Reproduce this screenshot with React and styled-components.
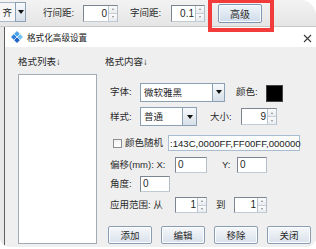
import React from "react";
import styled, { createGlobalStyle } from "styled-components";

const GlobalStyle = createGlobalStyle`
  html, body {
    margin: 0;
    padding: 0;
    background: #fff;
  }
  body {
    font-family: "Liberation Sans", "Noto Sans CJK SC", sans-serif;
  }
`;

const Frame = styled.div`
  position: relative;
  width: 316px;
  height: 247px;
  display: flex;
  flex-direction: column;
  overflow: hidden;
  border-radius: 2px 16px 10px 10px;
  background: #e9e9e9;
  font-size: 9.5px;
  color: #2b2b2b;
`;

const TopBar = styled.div`
  height: 27px;
  flex-shrink: 0;
  display: flex;
  align-items: center;
  box-sizing: border-box;
  background: linear-gradient(#f3f3f3, #e5e5e5);
  border-bottom: 1px solid #c9c9c9;
`;

const ComboStub = styled.div`
  display: flex;
  height: 20px;
  margin-top: -2px;
`;

const StubField = styled.div`
  width: 15px;
  display: flex;
  justify-content: flex-end;
  align-items: center;
  white-space: nowrap;
  padding-right: 3px;
  box-sizing: border-box;
  background: #f6f6f6;
  border-top: 1px solid #a8b6c5;
  border-bottom: 1px solid #a8b6c5;
`;

const ArrowButton = styled.div`
  width: ${(p) => p.$w}px;
  flex-shrink: 0;
  display: flex;
  align-items: center;
  justify-content: center;
  box-sizing: border-box;
  border: 1px solid #8ca0b5;
  background: linear-gradient(#f8fafc, #d7dfe8);
`;

const Triangle = styled.span`
  width: 0;
  height: 0;
  border-left: 3.5px solid transparent;
  border-right: 3.5px solid transparent;
  border-top: 4px solid #111;
`;

const Label = styled.span`
  width: ${(p) => p.$w}px;
  margin-left: ${(p) => p.$ml || 0}px;
  flex-shrink: 0;
  white-space: nowrap;
  line-height: 12px;
`;

const SpinBox = styled.div`
  width: ${(p) => p.$w}px;
  height: ${(p) => p.$h || 17}px;
  flex-shrink: 0;
  display: flex;
  box-sizing: border-box;
  border: 1px solid #7c8590;
  border-right-color: #b4bec9;
  border-bottom-color: #c2cad3;
  background: #fff;
`;

const SpinValue = styled.div`
  flex: 1;
  text-align: right;
  padding-right: 1px;
  line-height: ${(p) => p.$lh || 15}px;
  font-size: 10px;
  color: #1f1f1f;
`;

const SpinArrows = styled.div`
  width: 8px;
  display: flex;
  flex-direction: column;
  border-left: 1px solid #b9c4cf;
`;

const SpinHalf = styled.div`
  flex: 1;
  display: flex;
  align-items: center;
  justify-content: center;
  background: linear-gradient(#fbfbfb, #e8ecf0);
  & + & {
    border-top: 1px solid #c6cfd8;
  }
`;

const Tiny = styled.span`
  width: 0;
  height: 0;
  border-left: 1.5px solid transparent;
  border-right: 1.5px solid transparent;
  ${(p) =>
    p.$up ? "border-bottom: 2px solid #8a8a8a;" : "border-top: 2px solid #8a8a8a;"}
`;

const ToolButton = styled.button`
  width: 44px;
  height: 19px;
  margin-left: 13px;
  padding: 0;
  font-family: inherit;
  font-size: 10px;
  color: #2a2a2a;
  border: 1px solid #7f97b2;
  border-radius: 2px;
  background: linear-gradient(#eef4fa, #d0dcea);
  box-shadow: inset 0 0 0 1px #f7fbff;
`;

const Highlight = styled.div`
  position: absolute;
  left: 208px;
  top: -1px;
  width: 66px;
  height: 33px;
  box-sizing: border-box;
  border: 4px solid #f23b3b;
  pointer-events: none;
`;

const Lower = styled.div`
  flex: 1;
  display: flex;
  min-height: 0;
`;

const Strip = styled.div`
  width: 4px;
  flex-shrink: 0;
  background: #e8e8e8;
`;

const Dialog = styled.div`
  flex: 1;
  display: flex;
  flex-direction: column;
  border-left: 1px solid #5f5f5f;
  background: #efefef;
`;

const TitleBar = styled.div`
  height: 20px;
  flex-shrink: 0;
  display: flex;
  align-items: center;
  padding-left: 6px;
  background: #fff;
`;

const Title = styled.span`
  margin-left: 4px;
  font-size: 8.6px;
  color: #1a1a1a;
`;

const Close = styled.svg`
  margin-left: auto;
  margin-right: 4px;
  margin-top: 2px;
`;

const Body = styled.div`
  flex: 1;
  display: flex;
  padding: 9px 0 3px 13px;
  min-height: 0;
`;

const ListColumn = styled.div`
  width: 79px;
  flex-shrink: 0;
  display: flex;
  flex-direction: column;
`;

const Heading = styled.div`
  height: 12px;
  line-height: 12px;
  white-space: nowrap;
`;

const ListBox = styled.div`
  flex: 1;
  margin-top: 6px;
  background: #fff;
  border: 1px solid #a3abb4;
`;

const ContentColumn = styled.div`
  flex: 1;
  margin-left: 8px;
  display: flex;
  flex-direction: column;
`;

const Row = styled.div`
  display: flex;
  align-items: center;
  margin-top: ${(p) => p.$mt}px;
  padding-left: ${(p) => (p.$pl === undefined ? 5 : p.$pl)}px;
`;

const Combo = styled.div`
  width: ${(p) => p.$w}px;
  height: 19px;
  flex-shrink: 0;
  display: flex;
  box-sizing: border-box;
  border: 1px solid #8ca0b5;
  background: #fff;
`;

const ComboText = styled.div`
  flex: 1;
  padding-left: 3px;
  line-height: 17px;
  white-space: nowrap;
  overflow: hidden;
`;

const ComboArrow = styled(ArrowButton)`
  border: none;
  border-left: 1px solid #8ca0b5;
`;

const Swatch = styled.div`
  width: 17px;
  height: 17px;
  margin-top: 3px;
  box-sizing: border-box;
  background: #000;
  border: 1px solid #444;
`;

const CheckBox = styled.span`
  width: 9px;
  height: 9px;
  flex-shrink: 0;
  box-sizing: border-box;
  border: 1px solid #8d8d8d;
  background: linear-gradient(#f3f3f3, #fff);
`;

const ColorField = styled.div`
  width: 132px;
  height: 16px;
  margin-left: 2px;
  flex-shrink: 0;
  display: flex;
  align-items: center;
  white-space: nowrap;
  box-sizing: border-box;
  padding-left: 1px;
  border: 1px solid #a9bdd2;
  background: #fbfdff;
  font-size: 9.6px;
  color: #222;
`;

const TextBox = styled.div`
  width: ${(p) => p.$w}px;
  height: 16px;
  flex-shrink: 0;
  box-sizing: border-box;
  padding-left: 2px;
  line-height: 14px;
  font-size: 10px;
  border: 1px solid #7c8590;
  border-right-color: #b4bec9;
  border-bottom-color: #c2cad3;
  background: #fff;
`;

const ButtonRow = styled.div`
  display: flex;
  gap: 9px;
  margin-top: 13px;
  padding-left: 3px;
`;

const ActionButton = styled.button`
  width: 44px;
  height: 18px;
  padding: 0;
  font-family: inherit;
  font-size: 9.5px;
  color: #2a2a2a;
  border: 1px solid #8b9db2;
  border-radius: 2px;
  background: linear-gradient(#f5f8fb, #d9e1ea);
  box-shadow: inset 0 0 0 1px #fbfdff;
`;

const Spinner = ({ w, h, value }) => (
  <SpinBox $w={w} $h={h}>
    <SpinValue $lh={(h || 17) - 2}>{value}</SpinValue>
    <SpinArrows>
      <SpinHalf>
        <Tiny $up />
      </SpinHalf>
      <SpinHalf>
        <Tiny />
      </SpinHalf>
    </SpinArrows>
  </SpinBox>
);

const DialogIcon = () => (
  <svg width="12" height="12" viewBox="0 0 12 12">
    <polygon points="6,0 9,3 6,6 3,3" fill="#4ba4ea" />
    <polygon points="3,3 6,6 3,9 0,6" fill="#2f80da" />
    <polygon points="9,3 12,6 9,9 6,6" fill="#70c3f3" />
    <polygon points="6,6 9,9 6,12 3,9" fill="#1f63c6" />
    <path d="M3 3 L9 9 M9 3 L3 9" stroke="#fff" strokeWidth="0.7" />
  </svg>
);

const buttons = ["添加", "编辑", "移除", "关闭"];

export default function App() {
  return (
    <>
      <GlobalStyle />
      <Frame>
        <TopBar>
          <ComboStub>
            <StubField>齐</StubField>
            <ArrowButton $w={11}>
              <Triangle />
            </ArrowButton>
          </ComboStub>
          <Label $w={40} $ml={17}>行间距:</Label>
          <Spinner w={35} value="0" />
          <Label $w={41} $ml={12}>字间距:</Label>
          <Spinner w={34} value="0.1" />
          <ToolButton>高级</ToolButton>
        </TopBar>

        <Lower>
          <Strip />
          <Dialog>
            <TitleBar>
              <DialogIcon />
              <Title>格式化高级设置</Title>
              <Close width="9" height="9" viewBox="0 0 9 9">
                <path d="M1 1 L8 8 M8 1 L1 8" stroke="#3a3a3a" strokeWidth="1.1" />
              </Close>
            </TitleBar>

            <Body>
              <ListColumn>
                <Heading>格式列表↓</Heading>
                <ListBox />
              </ListColumn>

              <ContentColumn>
                <Heading>格式内容↓</Heading>

                <Row $mt={14}>
                  <Label $w={30}>字体:</Label>
                  <Combo $w={85}>
                    <ComboText>微软雅黑</ComboText>
                    <ComboArrow $w={12}>
                      <Triangle />
                    </ComboArrow>
                  </Combo>
                  <Label $w={30} $ml={11}>颜色:</Label>
                  <Swatch />
                </Row>

                <Row $mt={5}>
                  <Label $w={30}>样式:</Label>
                  <Combo $w={57}>
                    <ComboText>普通</ComboText>
                    <ComboArrow $w={14}>
                      <Triangle />
                    </ComboArrow>
                  </Combo>
                  <Label $w={31} $ml={13}>大小:</Label>
                  <Spinner w={36} value="9" />
                </Row>

                <Row $mt={9} $pl={8}>
                  <CheckBox />
                  <Label $w={41} $ml={3}>颜色随机</Label>
                  <ColorField>:143C,0000FF,FF00FF,000000</ColorField>
                </Row>

                <Row $mt={6}>
                  <Label $w={65}>偏移(mm): X:</Label>
                  <TextBox $w={32}>0</TextBox>
                  <Label $w={15} $ml={15}>Y:</Label>
                  <TextBox $w={30}>0</TextBox>
                </Row>

                <Row $mt={3}>
                  <Label $w={30}>角度:</Label>
                  <TextBox $w={30}>0</TextBox>
                </Row>

                <Row $mt={5}>
                  <Label $w={65}>应用范围: 从</Label>
                  <Spinner w={32} h={16} value="1" />
                  <Label $w={18} $ml={9}>到</Label>
                  <Spinner w={33} h={16} value="1" />
                </Row>

                <ButtonRow>
                  {buttons.map((b) => (
                    <ActionButton key={b}>{b}</ActionButton>
                  ))}
                </ButtonRow>
              </ContentColumn>
            </Body>
          </Dialog>
        </Lower>

        <Highlight />
      </Frame>
    </>
  );
}
